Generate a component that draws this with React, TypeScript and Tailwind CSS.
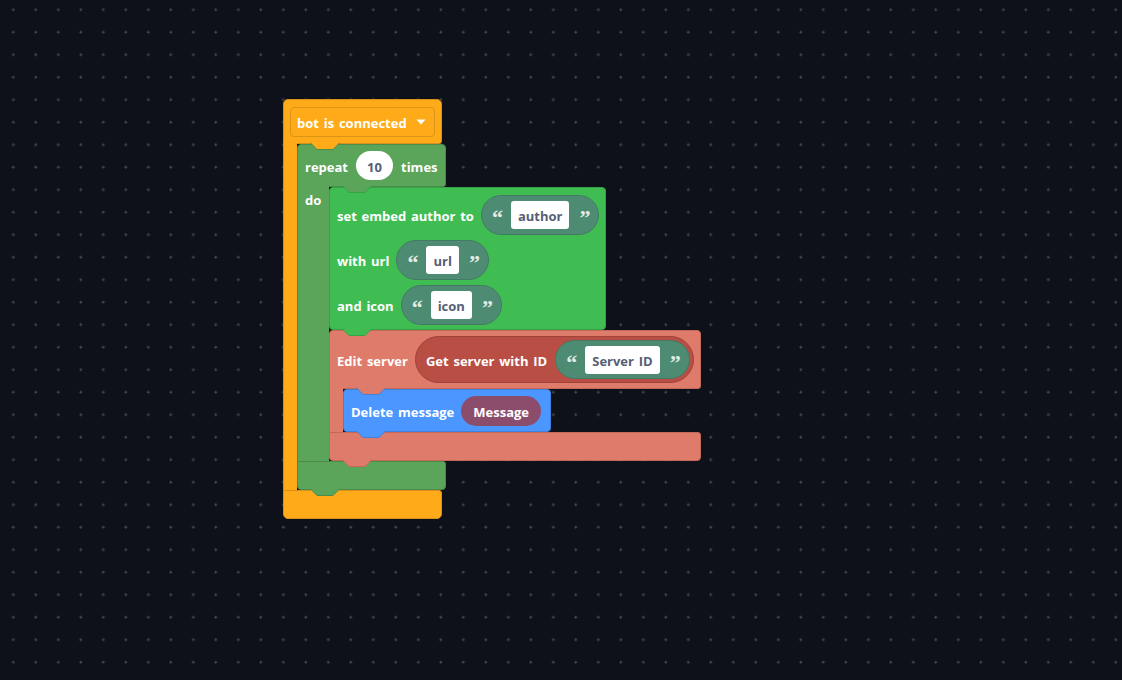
import React from "react";

// block palette
const C = {
  hat: "#ffab19",
  loop: "#5ba55b",
  loopLine: "#4b8c4b",
  embed: "#3fbd53",
  embedLine: "#35a246",
  server: "#df7b6b",
  serverLine: "#c4695a",
  msg: "#4c97ff",
  msgLine: "#3f80db",
};

function Tab({ fill, stroke, className }: { fill: string; stroke: string; className: string }) {
  return (
    <svg width="30" height="9" viewBox="0 0 30 9" className={`absolute top-full z-10 -mt-px ${className}`}>
      <path d="M0 0 L0 0.5 L7 7.5 L23 7.5 L30 0.5 L30 0 Z" fill={fill} />
      <path d="M0 0.5 L7 7.5 L23 7.5 L30 0.5" fill="none" stroke={stroke} />
    </svg>
  );
}

function T({ children }: { children: React.ReactNode }) {
  return <span className="relative top-[2px]">{children}</span>;
}

function Quote({ ch }: { ch: string }) {
  return (
    <span className="relative top-[3px] w-[9px] font-['Liberation_Serif',serif] text-[22px] leading-none text-[#e3ebe7]">
      {ch}
    </span>
  );
}

function Str({ text, h = "h-[40px]" }: { text: string; h?: string }) {
  return (
    <div className={`flex ${h} items-center gap-[10px] rounded-full border border-[#437a64] bg-[#4e8b73] px-[10px]`}>
      <Quote ch="“" />
      <div className="flex h-[28px] items-center rounded-[3px] bg-white px-[7px] text-[#575e75]">
        <T>{text}</T>
      </div>
      <Quote ch="”" />
    </div>
  );
}

function Grid() {
  return (
    <svg className="absolute inset-0 h-full w-full">
      <defs>
        <pattern id="dots" width="22.5" height="22.5" patternUnits="userSpaceOnUse" patternTransform="translate(1.8 -1.3)">
          <rect x="10" y="10.5" width="3" height="1" fill="#464b55" />
          <rect x="11" y="9.5" width="1" height="3" fill="#464b55" />
        </pattern>
      </defs>
      <rect width="100%" height="100%" fill="url(#dots)" />
    </svg>
  );
}

export default function App() {
  return (
    <div className="relative h-[680px] w-full overflow-hidden bg-[#0e1119] font-['Open_Sans',sans-serif] text-[13px] font-bold text-white [word-spacing:1.4px]">
      <Grid />

      {/* bot is connected */}
      <div className="absolute left-[283px] top-[99px] flex flex-col">
        <div className="relative h-[45px] w-[159px] rounded-t-[5px] rounded-br-[3px] border border-[#d9901a] bg-[#ffab19] pl-[6px] pt-[7px]">
          <div className="flex h-[30px] w-[145px] items-center justify-between rounded-[4px] border border-[#dc9416] pl-[6px] pr-[8px]">
            <T>bot is connected</T>
            <svg width="10" height="6" viewBox="0 0 10 6">
              <path d="M0.5 0.5 L9.5 0.5 L5 5.5 Z" fill="white" />
            </svg>
          </div>
          <Tab fill={C.hat} stroke={C.loopLine} className="left-[26px]" />
        </div>

        <div className="flex">
          <div className="relative -my-px w-[14px] border-l border-[#d9901a] bg-[#ffab19]" />

          {/* repeat */}
          <div className="flex flex-col">
            <div className="relative flex h-[43px] w-[149px] items-center gap-[8px] rounded-t-[4px] rounded-br-[3px] border border-[#4b8c4b] bg-[#5ba55b] pl-[7px]">
              <T>repeat</T>
              <div className="flex h-[29px] w-[37px] items-center justify-center rounded-full bg-white text-[#575e75]">
                <T>10</T>
              </div>
              <T>times</T>
              <Tab fill={C.loop} stroke={C.embedLine} className="left-[44px]" />
            </div>

            <div className="flex">
              <div className="relative -my-px w-[32px] border-l border-[#4b8c4b] bg-[#5ba55b] pl-[7px] pt-[5px]">do</div>

              <div className="flex flex-col">
                {/* set embed author */}
                <div className="relative flex h-[143px] w-[277px] flex-col gap-[5px] rounded-[4px] border border-[#35a246] bg-[#3fbd53] pl-[7px] pt-[7px]">
                  <div className="flex h-[40px] items-center gap-[7px]">
                    <T>set embed author to</T>
                    <Str text="author" />
                  </div>
                  <div className="flex h-[40px] items-center gap-[7px]">
                    <T>with url</T>
                    <Str text="url" />
                  </div>
                  <div className="flex h-[40px] items-center gap-[7px]">
                    <T>and icon</T>
                    <Str text="icon" />
                  </div>
                  <Tab fill={C.embed} stroke={C.embedLine} className="left-[12px]" />
                </div>

                {/* edit server */}
                <div className="flex flex-col">
                  <div className="relative flex h-[59px] w-[372px] items-center gap-[7px] rounded-t-[4px] rounded-br-[3px] border border-[#c4695a] bg-[#df7b6b] pl-[7px]">
                    <T>Edit server</T>
                    <div className="flex h-[47px] items-center gap-[8px] rounded-full border border-[#9f423a] bg-[#b94e45] pl-[10px] pr-[3px]">
                      <T>Get server with ID</T>
                      <Str text="Server ID" h="h-[39px]" />
                    </div>
                    <Tab fill={C.server} stroke={C.msgLine} className="left-[26px]" />
                  </div>

                  <div className="flex">
                    <div className="relative -my-px w-[14px] border-l border-[#c4695a] bg-[#df7b6b]" />
                    <div className="relative flex h-[43px] w-[208px] items-center gap-[7px] rounded-[4px] border border-[#3f80db] bg-[#4c97ff] pl-[7px]">
                      <T>Delete message</T>
                      <div className="flex h-[30px] items-center rounded-full bg-[#8c4d6c] px-[12px]">
                        <T>Message</T>
                      </div>
                      <Tab fill={C.msg} stroke={C.msgLine} className="left-[12px]" />
                    </div>
                  </div>

                  <div className="relative h-[29px] w-[372px] rounded-b-[4px] rounded-tr-[3px] border border-[#c4695a] bg-[#df7b6b]">
                    <Tab fill={C.server} stroke={C.serverLine} className="left-[12px]" />
                  </div>
                </div>
              </div>
            </div>

            <div className="relative h-[29px] w-[149px] rounded-b-[4px] rounded-tr-[3px] border border-[#4b8c4b] bg-[#5ba55b]">
              <Tab fill={C.loop} stroke={C.loopLine} className="left-[12px]" />
            </div>
          </div>
        </div>

        <div className="relative h-[29px] w-[159px] rounded-b-[5px] rounded-tr-[3px] border border-[#d9901a] bg-[#ffab19]" />
      </div>
    </div>
  );
}
